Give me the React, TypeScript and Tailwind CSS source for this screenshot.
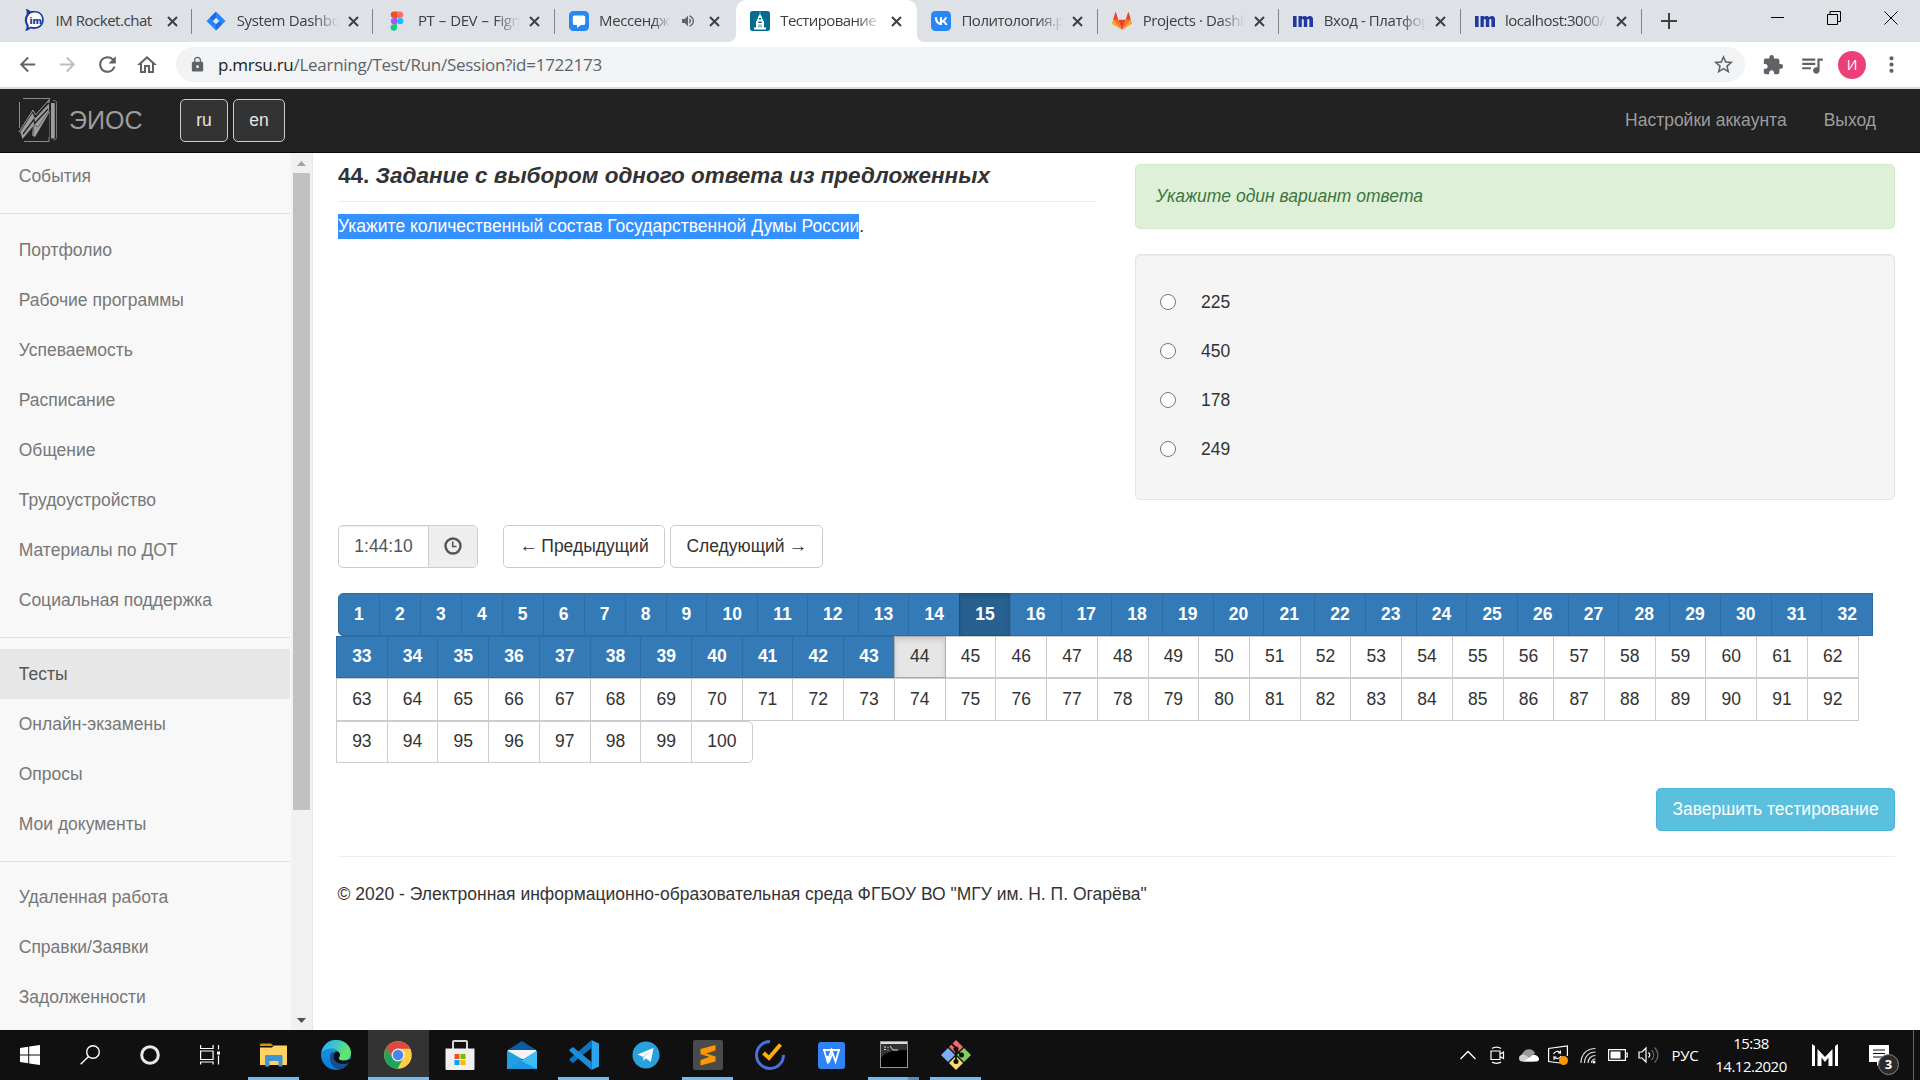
import React from "react";
import {
  MdArrowBack, MdArrowForward, MdRefresh, MdOutlineHome, MdLock, MdStarBorder,
  MdExtension, MdQueueMusic, MdMoreVert, MdVolumeUp,
} from "react-icons/md";

const UI = "font-['Open_Sans',sans-serif]";

/* ---------- favicons ---------- */
const RocketIcon = () => (
  <svg width="22" height="26" viewBox="0 0 22 26" className="-ml-px">
    <path d="M1.5 1c2 .2 4 1.100 5 2.300C8.500 2.700 13 2.500 16 4.500c5 3.200 5 11.500 0 14.800-3 2-7 1.900-9.500 1.300C5 22 3 23 1 22.600c1.500-1.500 2-3.500 1.200-5.500C.3 14 .3 9.500 2.500 6.500 3 4.500 2.700 2.500 1.500 1z" fill="#1f3a9e" />
    <path d="M6.500 5.500c3-1.300 6.500-1.200 9 .6 3.500 2.800 3.500 8.800 0 11.500-2.500 1.800-6 1.900-9 .8-.8.700-1.300 1-2 1.200.5-1.500.3-2.600-.6-3.800C2.300 12.500 3 8 6.500 5.500z" fill="#fff" />
    <text x="5.500" y="15.500" fontSize="9.500" fontWeight="800" fill="#1f3a9e" fontFamily="Open Sans">im</text>
  </svg>
);
const JiraIcon = () => (
  <svg width="20" height="20" viewBox="0 0 20 20"><path d="M10 .5l9.500 9.500-9.500 9.500L.5 10z" fill="#2684ff" /><path d="M10 6.700l3.300 3.300-3.300 3.300L6.700 10z" fill="#dee1e6" /><path d="M10 .5v6.200L6.700 10 4 6.500z" fill="#0f5fd6" opacity=".6" /><path d="M10 19.500v-6.200l3.300-3.300 2.700 3.500z" fill="#0f5fd6" opacity=".6" /></svg>
);
const FigmaIcon = () => (
  <svg width="20" height="20" viewBox="0 0 20 20"><path d="M10 .5H7a3.200 3.200 0 000 6.400h3z" fill="#f24e1e" /><path d="M10 .5h3a3.200 3.200 0 010 6.400h-3z" fill="#ff7262" /><path d="M10 6.900H7a3.200 3.200 0 000 6.400h3z" fill="#a259ff" /><circle cx="13.200" cy="10.100" r="3.200" fill="#1abcfe" /><path d="M7 13.300h3v3.100a3.200 3.200 0 11-3-3.100z" fill="#0acf83" /></svg>
);
const MessengerIcon = () => (
  <svg width="20" height="20" viewBox="0 0 20 20"><rect width="20" height="20" rx="4.500" fill="#2787f5" /><path d="M5.500 4.500h9A1.700 1.700 0 0116.200 6v6.500a1.700 1.700 0 01-1.700 1.500H12l-4 3v-3H5.500A1.700 1.700 0 013.800 12.500V6a1.700 1.700 0 011.700-1.500z" fill="#fff" /></svg>
);
const UnivIcon = () => (
  <svg width="20" height="20" viewBox="0 0 20 20"><rect width="20" height="20" rx="2.500" fill="#046c91" /><path d="M9.700 1h.6v2.500l1.700 2.500v2h1v2h1v6.500h2V18.500H4V16.500h2V10h1V8h1V6l1.700-2.500z" fill="#fff" /><path d="M9 7h2v1.500H9zM8.300 10.500h3.400v1.500H8.300zM8.600 13.500h.8v3h-.8zM10.600 13.500h.8v3h-.8z" fill="#046c91" /></svg>
);
const VkIcon = () => (
  <svg width="20" height="20" viewBox="0 0 20 20"><rect width="20" height="20" rx="4.500" fill="#2787f5" /><path d="M10.700 14c-4.300 0-6.800-2.900-6.900-7.800h2.200c.1 3.600 1.700 5.100 2.900 5.400V6.200H11v3.100c1.200-.1 2.500-1.500 2.900-3.100H16c-.3 1.900-1.700 3.300-2.700 3.900 1 .5 2.600 1.700 3.200 3.900h-2.300c-.5-1.500-1.700-2.700-3.200-2.800V14z" fill="#fff" /></svg>
);
const GitlabIcon = () => (
  <svg width="20" height="20" viewBox="0 0 20 20"><path d="M10 19l3.700-10.300H6.300z" fill="#e24329" /><path d="M10 19L6.300 8.700H1.100zM10 19l3.700-10.300h5.200z" fill="#fc6d26" /><path d="M1.100 8.700L0 12c0 .4.100.7.400.9L10 19zM18.900 8.700L20 12c0 .4-.1.700-.4.900L10 19z" fill="#fca326" /><path d="M1.100 8.700h5.200L4 1.500c-.1-.4-.6-.4-.7 0zM18.900 8.700h-5.200L16 1.500c.1-.4.600-.4.700 0z" fill="#e24329" /></svg>
);
const ImIcon = () => (
  <svg width="22" height="20" viewBox="0 0 22 20" className="-ml-px"><path d="M1 5h3.600v11H1zM6.500 5H10v1.300C11.300 4.500 14 4.400 15 6.300c1.500-2 6-2.300 6 2V16h-3.600V9.500c0-2-2.200-1.800-2.200 0V16h-3.400V9.500c0-2-2-1.800-2 0V16H6.500z" fill="#2238a0" /></svg>
);

const tabs = [
  { t: "IM Rocket.chat", I: RocketIcon, sep: true, track: "tracking-[-0.47px]" },
  { t: "System Dashboard", I: JiraIcon, sep: true, track: "tracking-[-0.35px]" },
  { t: "PT – DEV – Figma", I: FigmaIcon, sep: true, track: "tracking-[-0.5px] [word-spacing:1.2px]" },
  { t: "Мессенджер", I: MessengerIcon, sound: true, track: "tracking-[-0.4px]" },
  { t: "Тестирование - ", I: UnivIcon, active: true, track: "tracking-[-0.6px]" },
  { t: "Политология.pdf", I: VkIcon, sep: true, track: "tracking-[-0.5px]" },
  { t: "Projects · Dashboard", I: GitlabIcon, sep: true, track: "tracking-[-0.4px]" },
  { t: "Вход - Платформа", I: ImIcon, sep: true, track: "tracking-[-0.4px]" },
  { t: "localhost:3000/a", I: ImIcon, sep: true, track: "tracking-[-0.48px]" },
];

const Cross = () => (
  <svg width="11" height="11" viewBox="0 0 11 11" className="shrink-0"><path d="M1 1l9 9M10 1l-9 9" stroke="#3c4043" strokeWidth="2" /></svg>
);

function TabStrip() {
  return (
    <div className="flex h-[42px] bg-[#dee1e6] pl-[11px]">
      {tabs.map(({ t, I, sep, sound, active, track }, i) => (
        <div key={i} className={"relative flex h-[42px] w-[181.2px] shrink-0 items-center pl-[14px] " + (active ? "rounded-t-[10px] bg-white" : "")}>
          {active && (
            <svg className="absolute -left-[8px] bottom-0" width="197" height="8" viewBox="0 0 197 8"><path d="M8 0v8H0c5 0 8-3 8-8zM189 0v8h8c-5 0-8-3-8-8z" fill="#fff" /></svg>
          )}
          <span className="flex w-[30.500px] shrink-0 items-center"><I /></span>
          <span className={"-mt-px overflow-hidden whitespace-nowrap text-[15px] text-[#3c4043] " + track + (sound ? " w-[72px]" : " w-[102px]") + (i ? " [mask-image:linear-gradient(to_right,#000_75%,transparent)]" : "")}>{t}</span>
          {sound && <MdVolumeUp className="ml-[9px] mr-[4px] h-[16px] w-[16px] shrink-0 text-[#5f6368]" />}
          <span className="ml-[9px]"><Cross /></span>
          {sep && <span className="absolute right-0 top-[9px] h-[25px] w-px bg-[#808387]" />}
        </div>
      ))}
      <svg className="ml-[19px] mt-[13px]" width="16" height="16" viewBox="0 0 16 16"><path d="M8 0v16M0 8h16" stroke="#3c4043" strokeWidth="2" /></svg>
      <div className="ml-auto mr-[22px] flex gap-[43px] pt-[11px]">
        <svg width="14" height="14" viewBox="0 0 14 14"><path d="M1 6.500h13" stroke="#000" /></svg>
        <svg width="14" height="14" viewBox="0 0 14 14" fill="none" stroke="#000"><path d="M.5 3.500h10v10H.5zM3 3V.500h10.500v10H11" /></svg>
        <svg width="14" height="14" viewBox="0 0 14 14"><path d="M.5 .5l13 13M13.500 .5l-13 13" stroke="#000" /></svg>
      </div>
    </div>
  );
}

function Toolbar() {
  return (
    <div className="flex h-[47px] items-center border-b-2 border-[#dadce0] bg-white pl-[16px]">
      <MdArrowBack className="h-[23px] w-[23px] text-[#5f6368]" />
      <MdArrowForward className="ml-[17px] h-[23px] w-[23px] text-[#bcbec1]" />
      <MdRefresh className="ml-[16px] h-[25px] w-[25px] text-[#5f6368]" />
      <MdOutlineHome className="ml-[15px] h-[24px] w-[24px] text-[#5f6368]" />
      <div className="ml-[17px] flex h-[35px] w-[1568.5px] shrink-0 items-center rounded-full bg-[#f1f3f4] pl-[13px] pr-[10px]">
        <MdLock className="h-[17px] w-[17px] text-[#5f6368]" />
        <span className="ml-[12px] whitespace-nowrap text-[17px] tracking-[-0.27px] text-[#5f6368]"><span className="text-[#202124]">p.mrsu.ru</span>/Learning/Test/Run/Session?id=1722173</span>
        <MdStarBorder className="ml-auto h-[23px] w-[23px] text-[#5f6368]" />
      </div>
      <MdExtension className="ml-[17px] h-[22px] w-[22px] text-[#5f6368]" />
      <MdQueueMusic className="ml-[15px] h-[26px] w-[26px] text-[#5f6368]" />
      <span className="ml-[13.500px] flex h-[28px] w-[28px] items-center justify-center rounded-full bg-[#ec407a] text-[14px] text-white">И</span>
      <MdMoreVert className="ml-[13px] h-[25px] w-[25px] text-[#5f6368]" />
    </div>
  );
}

/* ---------- page ---------- */
const Logo = () => (
  <svg width="40" height="46" viewBox="0 0 40 46" fill="none" className="mb-[2px]">
    <path d="M5 1.500h27l-2.500 4M1.500 5v26M6 44.500h25V40" stroke="#8a8a8a" strokeWidth="1" />
    <path d="M1 35L15 13l2.500 5L31 3v3" stroke="#9d9d9d" strokeWidth="1" />
    <path d="M2 35.500L14.500 16l2.500 5.500L31 6.500v9.500L17 40l-3-1.500 1-9L4.500 42 3 37z" fill="#9d9d9d" />
    <path d="M5 37L15.800 22.500l.8 4L30 12" stroke="#222" strokeWidth="1.300" />
    <path d="M15 39l1-11 4 2 11-16" stroke="#555" strokeWidth=".8" />
    <path d="M31.500 14v30" stroke="#555" />
    <path d="M33 6h3.800v35.500H33z" fill="#9d9d9d" /><path d="M35 3.500c3 0 3.500.5 3.500 3V40c0 2-1 3-3 3" stroke="#777" />
  </svg>
);

function Navbar() {
  return (
    <div className="flex h-[64px] items-center border-b border-[#080808] bg-[#222] pl-[18px] pr-[44px] text-[#9d9d9d]">
      <Logo />
      <span className="ml-[11px] w-[111px] text-[25px]">ЭИОС</span>
      <span className="flex h-[43px] w-[48px] items-center justify-center rounded-[5px] border border-[#ccc] bg-[#333] text-[#e6e6e6]">ru</span>
      <span className="ml-[5px] flex h-[43px] w-[52px] items-center justify-center rounded-[5px] border border-[#ccc] bg-[#333] text-[#e6e6e6]">en</span>
      <span className="ml-auto">Настройки аккаунта</span>
      <span className="ml-[37px]">Выход</span>
    </div>
  );
}

const groups = [
  ["События"],
  ["Портфолио", "Рабочие программы", "Успеваемость", "Расписание", "Общение", "Трудоустройство", "Материалы по ДОТ", "Социальная поддержка"],
  ["Тесты", "Онлайн-экзамены", "Опросы", "Мои документы"],
  ["Удаленная работа", "Справки/Заявки", "Задолженности"],
];

function Sidebar() {
  return (
    <div className="flex h-[877px] w-[313px] shrink-0 overflow-hidden border-r border-[#e7e7e7] bg-[#f8f8f8]">
      <div className="-mt-[2px] w-[290px] shrink-0 text-[#777]">
        {groups.map((g, i) => (
          <div key={i}>
            {i > 0 && <div className={"mt-[11.5px] h-px bg-[#e0e0e0] " + (i === 3 ? "mb-[10.5px]" : "mb-[11.5px]")} />}
            {g.map((s) => (
              <div key={s} className={"flex h-[50px] items-center pl-[18.75px] " + (s === "Тесты" ? "bg-[#e7e7e7] text-[#555]" : "")}>{s}</div>
            ))}
          </div>
        ))}
      </div>
      <div className="ml-px flex w-[22px] flex-col items-center bg-[#f1f1f1]">
        <svg width="17" height="20" viewBox="0 0 17 20"><path d="M4 13l4.500-5 4.500 5z" fill="#a3a3a3" /></svg>
        <div className="h-[637px] w-[17px] bg-[#c1c1c1]" />
        <svg className="mt-auto" width="17" height="20" viewBox="0 0 17 20"><path d="M4 8l4.500 5L13 8z" fill="#505050" /></svg>
      </div>
    </div>
  );
}

const rows = [[1, 32], [33, 62], [63, 92], [93, 100]];

function cellStyle(n: number) {
  if (n === 15) return "bg-[#286090] border-[#204d74] text-white font-bold shadow-[inset_0_3px_5px_rgba(0,0,0,.125)]";
  if (n < 44) return "bg-[#337ab7] border-[#2e6da4] text-white font-bold";
  if (n === 44) return "relative bg-[#e6e6e6] border-[#adadad] text-[#333] shadow-[inset_0_3px_5px_rgba(0,0,0,.125)]";
  return "bg-white border-[#ccc] text-[#333]";
}

function cellWidth(n: number) {
  if (n < 10) return " w-[41.95px]";
  if (n === 11) return " w-[50.75px]";
  return n === 100 ? " w-[61.5px]" : " w-[51.72px]";
}

function Pager() {
  return (
    <div className="mt-[25px]">
      {rows.map(([a, b], r) => (
        <div key={a} className={"flex h-[42.5px] " + (r ? "-ml-[2px]" : "")}>
          {Array.from({ length: b - a + 1 }, (_, k) => a + k).map((n) => (
            <span
              key={n}
              className={
                "flex h-[42.5px] shrink-0 items-center justify-center border " + cellStyle(n) + cellWidth(n) +
                (n === a ? "" : " -ml-px") + (n === 1 ? " rounded-l-[5px]" : "") + (n === 100 ? " rounded-r-[5px]" : "")
              }
            >
              {n}
            </span>
          ))}
        </div>
      ))}
    </div>
  );
}

function Main() {
  return (
    <div className="flex grow flex-col pl-[25px] pr-[25px] text-[#333]">
      <div className="flex h-[347px] justify-between pt-[11px]">
        <div className="w-[759px]">
          <div className="-mt-px h-[38.500px] border-b border-[#eee] text-[22.5px] font-bold leading-[25px]">44. <i>Задание с выбором одного ответа из предложенных</i></div>
          <div className="mt-[12px] h-[25px] leading-[25px]"><span className="inline-block h-[25px] bg-[#3390ff] text-white">Укажите количественный состав Государственной Думы России</span>.</div>
        </div>
        <div className="w-[760px]">
          <div className="h-[65px] rounded-[5px] border border-[#d6e9c6] bg-[#dff0d8] pl-[20px] pt-[19px] italic leading-[25px] text-[#3c763d]">Укажите один вариант ответа</div>
          <div className="mt-[25px] h-[246px] rounded-[5px] border border-[#e3e3e3] bg-[#f5f5f5] pl-[24px] pt-[22px] shadow-[inset_0_1px_1px_rgba(0,0,0,.05)]">
            {["225", "450", "178", "249"].map((v) => (
              <div key={v} className="flex h-[49px] items-center">
                <span className="h-[16px] w-[16px] rounded-full border border-[#767676] bg-white" />
                <span className="ml-[25px] pt-[2px]">{v}</span>
              </div>
            ))}
          </div>
        </div>
      </div>
      <div className="mt-[25px] flex h-[43px]">
        <div className="flex w-[140px] overflow-hidden rounded-[5px] border border-[#ccc] text-[#555]">
          <span className="flex w-[90px] items-center justify-center border-r border-[#ccc] shadow-[inset_0_1px_1px_rgba(0,0,0,.075)]">1:44:10</span>
          <span className="flex grow items-center justify-center bg-[#eee]">
            <svg width="18" height="18" viewBox="0 0 18 18" fill="none" stroke="#555" className="mb-[2px]"><circle cx="9" cy="9" r="7.500" strokeWidth="2.400" /><path d="M8.700 4.500v5h3.800" strokeWidth="1.600" /></svg>
          </span>
        </div>
        <span className="ml-[25px] flex w-[162px] items-center justify-center gap-[4px] rounded-[5px] border border-[#ccc]"><span className="-mt-[3px] w-[18px] text-[19px]">←</span>Предыдущий</span>
        <span className="ml-[5px] flex w-[153px] items-center justify-center gap-[4px] rounded-[5px] border border-[#ccc]">Следующий<span className="-mt-[3px] w-[18px] text-[19px]">→</span></span>
      </div>
      <Pager />
      <div className="mt-[25px] flex h-[43px] w-[239px] items-center justify-center self-end rounded-[5px] border border-[#46b8da] bg-[#5bc0de] text-white">Завершить тестирование</div>
      <div className="mt-[25px] h-px bg-[#eee]" />
      <div className="-ml-[0.5px] mt-[25px] leading-[25px]">© 2020 - Электронная информационно-образовательная среда ФГБОУ ВО "МГУ им. Н. П. Огарёва"</div>
    </div>
  );
}

/* ---------- taskbar ---------- */
const S = ({ children, w = 30, h = 30 }: { children: React.ReactNode; w?: number; h?: number }) => (
  <svg width={w} height={h} viewBox={`0 0 ${w} ${h}`} fill="none">{children}</svg>
);
const system = [
  <S w={20} h={20}><path d="M0 3l8.200-1.200v7.700H0zM9.200 1.600L20 0v9.500H9.200zM0 10.500h8.200v7.700L0 17zM9.200 10.500H20V20L9.200 18.400z" fill="#fff" /></S>,
  <S w={20} h={20}><circle cx="13" cy="7" r="6.300" stroke="#fff" strokeWidth="1.400" /><path d="M8.500 11.500L.7 19.300" stroke="#fff" strokeWidth="1.400" /></S>,
  <S w={20} h={20}><circle cx="10" cy="10" r="8.300" stroke="#e8e8e8" strokeWidth="3" /></S>,
  <S w={20} h={20}><path d="M.6 0v3.500h12.500V0M.6 6h12.500v8.500H.6zM.6 19.500V17h12.500v2.500M18.500 0v4.500M18.500 10.500v9" stroke="#fff" strokeWidth="1.200" /><path d="M17 6.500h3v3h-3z" fill="#fff" /></S>,
];
const apps = [
  { bar: 1, i: <S><path d="M1 5.500C1 4 1.500 3.500 3 3.500h9l2.500 2.500H1z" fill="#d99300" /><path d="M1 7.500h12l2-2h13V25H1z" fill="#ffd262" /><path d="M6 16.500c0-1 .5-1.500 1.500-1.500H22c1 0 1.500.5 1.500 1.500V26.500h-4V21h-9v5.500H6z" fill="#3f94d6" /></S> },
  { i: <S><defs><linearGradient id="eg" x1="0" y1="0" x2="1" y2=".5"><stop offset=".25" stopColor="#2cb7ee" /><stop offset=".9" stopColor="#63e46f" /></linearGradient><linearGradient id="eb" x1="0" y1="0" x2="0" y2="1"><stop stopColor="#1c9be0" /><stop offset="1" stopColor="#0d7ad8" /></linearGradient></defs><circle cx="15" cy="15" r="15" fill="url(#eb)" /><path d="M.3 13C2 4.500 8 0 15 0c9 0 15 6 15 13 0 4.500-3 7.500-7.500 7.500-3 0-5-1-4.500-2.500C20 14 17 8.500 11 8.500 6 8.500 1.500 10.500.3 13z" fill="url(#eg)" /><path d="M10.500 12.500C6.500 18 10 28.500 18.500 29.600c4-1 7.500-4 9.200-7.600-6 3-16 1-15.200-9.500z" fill="#124f93" /><path d="M15.500 11.500c2 0 3.700 1.700 3.500 3.700-.1 1.500-1.700 2.500-1 3.800 1 2 6.500 2.300 10.500.2H30v5l-2-1.500c-5.500 2.300-11 1.300-13.800-2-2.700-3.200-2-9.200 1.300-9.200z" fill="#101010" /></S> },
  { on: 1, bar: 1, i: <S w={28} h={28}><circle cx="14" cy="14" r="13.800" fill="#ffcd46" /><path d="M26.300 7.800H14L8.600 17.100 2 7.200a13.800 13.800 0 0124.300.6z" fill="#db4a3f" /><path d="M2.100 7.100l6.500 10 10.800 0-6 10.700A13.800 13.800 0 012.100 7.100z" fill="#1da362" /><circle cx="14" cy="14" r="6.500" fill="#f1f1f1" /><circle cx="14" cy="14" r="5.200" fill="#4a86f0" /></S> },
  { i: <S><path d="M8 9V2q0-1 1-1h12q1 0 1 1v7" stroke="#d8d8d8" strokeWidth="2" /><path d="M.5 8.500h29v20.500q0 1-1 1h-27q-1 0-1-1z" fill="#f0f0f0" /><path d="M9.500 14h5v5h-5z" fill="#f25022" /><path d="M15.500 14h5v5h-5z" fill="#7fba00" /><path d="M9.500 20h5v5h-5z" fill="#00a4ef" /><path d="M15.500 20h5v5h-5z" fill="#ffb900" /></S> },
  { i: <S><path d="M0 10.500L15 1l15 9.500z" fill="#0a5aa5" /><path d="M1 10h28v9H1z" fill="#f3f3f3" /><path d="M0 10.500L15 19l-7 10H0z" fill="#1fa0e4" /><path d="M30 10.500V29H0z" fill="#3dbcf5" /><path d="M13.500 20.500L30 29H0z" fill="#2196e0" /></S> },
  { bar: 1, i: <S><path d="M22.500 0L30 3.500v23L22.500 30z" fill="#2ba4ef" /><path d="M22.500 0v8L4 23 .5 20.500V19L22 .5z" fill="#0d74bd" /><path d="M22.500 30v-8L4 7 .5 9.500V11L22 29.500z" fill="#1c8ddb" /></S> },
  { i: <S w={28} h={28}><circle cx="14" cy="14" r="13.500" fill="#2aa1dc" /><path d="M5.500 13.500L21.500 7l-2.700 14-5-3.700-2.500 2.400-.5-4z" fill="#fff" /><path d="M10.800 15.700L18.500 10l-6 6.300-1.200 3.400z" fill="#b8d5e6" /></S> },
  { bar: 1, i: <S><rect width="30" height="30" rx="2" fill="#4a4a4a" /><path d="M22.500 5v5.500L13 13.500l9.500 3v5L7.500 25.500V20l9-3-9-3V9z" fill="#ff9800" /></S> },
  { i: <S><path d="M15 1.500A13.500 13.500 0 1028.500 15" stroke="#4772dd" strokeWidth="3" /><path d="M8.500 13l5.500 5L25.500 4.500" stroke="#ffab0f" strokeWidth="4" /></S> },
  { i: <S w={27} h={27}><rect width="27" height="27" rx="3" fill="#2f83f5" /><path d="M5 8h17M6 8l3.500 11.500L13.500 8l4 11.500L21 8M9 14l2 5.500 4-9" stroke="#fff" strokeWidth="1.800" /></S> },
  { bar: 2, i: <S w={28} h={28}><rect x=".5" y=".5" width="27" height="26" fill="#000" stroke="#90969b" /><path d="M1 1h26v2H1z" fill="#d8dde1" /><path d="M1 3h26v6C14 9 5 11 1 17z" fill="#333" /><path d="M4 6h2M4 8.500h2M8 6v1M8 8.500v1M10 5l3 4h5" stroke="#ddd" /></S> },
  { bar: 1, i: <S><path d="M15 0l7 7-7 7-7-7z" fill="#f4696b" /><path d="M7 8l7 7-7 7-7-7z" fill="#7aacf7" /><path d="M23 8l7 7-7 7-7-7z" fill="#82cf60" /><path d="M15 16l7 7-7 7-7-7z" fill="#fbdc74" /><path d="M10.500 3.500L15 8v13M15 10l5.500 5" stroke="#101010" strokeWidth="1.800" /><circle cx="15" cy="9" r="2.500" fill="#101010" /><circle cx="20.500" cy="15" r="2.500" fill="#101010" /><circle cx="15" cy="21.500" r="2.500" fill="#101010" /></S> },
];
const tray = [
  <S w={16} h={10}><path d="M.5 9L8 1.500 15.500 9" stroke="#fff" strokeWidth="1.300" /></S>,
  <S w={16} h={18}><path d="M1 5h9v8.500H1zM10 8l3.500-2v6.500L10 10.500M2 2.500C4 .7 9 .7 11 2.500M2 16c2 1.700 7 1.700 9 0" stroke="#fff" strokeWidth="1.200" /></S>,
  <S w={21} h={14}><path d="M6 13a5.500 5.500 0 01-.5-9A6.500 6.500 0 0117 5.500L9 13z" fill="#9a9a9a" /><path d="M1 10c0-3 4-4.500 6-3l9 6.500H4C2 13.500 1 12 1 10z" fill="#d0d0d0" /><path d="M5 13.500l8-5c3-3.500 8-.5 8 2.500 0 1.500-1 2.500-2.500 2.500z" fill="#fff" /></S>,
  <S w={20} h={20}><path d="M12 18L.6 16.500v-13L19.400 1v10" stroke="#fff" strokeWidth="1.200" /><path d="M5.500 9c1-3 5-3.500 7-1V5.500M12.500 8H10M13 11c-1 3-5 3.500-7 1v3M6 12h2.500" stroke="#fff" strokeWidth="1.100" /><circle cx="15.500" cy="15.500" r="4.500" fill="#ff9800" /></S>,
  <S w={16} h={18}><path d="M1 17C1 8 7 2.500 15.500 2.500M4.500 17C4.500 10.500 9 6 15.500 6M8 17c0-4 3-7.500 7.500-7.500" stroke="#ddd" strokeWidth="1.200" /><path d="M11.500 17c0-2 1.500-4 4-4" stroke="#ddd" strokeWidth="1.200" /><circle cx="14" cy="16" r="1.500" fill="#fff" /></S>,
  <S w={20} h={12}><path d="M.6.6h16.800v10.800H.6zM17.500 4h1.700v4h-1.700" stroke="#fff" strokeWidth="1.200" /><path d="M2.500 2.500h10v7h-10z" fill="#fff" /></S>,
  <S w={21} h={18}><path d="M1 6h3l4-4v14l-4-4H1z" stroke="#fff" strokeWidth="1.200" /><path d="M10.500 6.500c1.500 1.500 1.500 3.500 0 5" stroke="#fff" strokeWidth="1.200" /><path d="M13.500 4c3 3 3 7 0 10M16.500 1.500c4.500 4.500 4.500 10.500 0 15" stroke="#666" strokeWidth="1.200" /></S>,
];

function Taskbar() {
  return (
    <div className="flex h-[50px] bg-[#101010] text-white">
      <div className="flex w-[242.5px]">
        {system.map((ic, i) => <span key={i} className="flex w-[60px] items-center justify-center">{ic}</span>)}
      </div>
      {apps.map((a, i) => (
        <span key={i} className={"relative flex w-[62px] items-center justify-center " + (a.on ? "bg-[#333] bg-clip-content pl-px" : "")}>
          {a.i}
          {a.bar && <span className={"absolute bottom-0 h-[3px] bg-[#76b9ed] " + (a.on ? "left-px right-0" : "inset-x-[5.5px]")} />}
          {a.bar === 2 && <span className="absolute bottom-0 right-[5.5px] h-[3px] w-[11px] bg-[#5a8cb5]" />}
        </span>
      ))}
      <div className="ml-auto flex pr-px">
        {tray.map((ic, i) => <span key={i} className="flex w-[30px] items-center justify-center">{ic}</span>)}
        <span className="flex w-[44px] items-center justify-center text-[15px] tracking-[-0.3px]">РУС</span>
        <span className="-mt-px flex w-[88px] flex-col items-center justify-center text-[15px] leading-[23px] tracking-[-0.5px]"><span>15:38</span><span>14.12.2020</span></span>
        <span className="flex w-[59px] items-center justify-center">
          <S w={26} h={22}><path d="M0 0l3 2v20H0zM26 0l-3 2v20h3zM5.500 5l7.500 8 7.500-8v17h-4V13.500L13 18l-3.500-4.500V22h-4z" fill="#fff" /></S>
        </span>
        <span className="relative w-[60px] border-r border-[#666]">
          <svg className="ml-[15px] mt-[14px]" width="20" height="22" viewBox="0 0 20 22"><path d="M0 1h20v17h-8l-4 4v-4H0z" fill="#fff" /><path d="M4 6h12M4 9.500h12M4 13h12" stroke="#101010" strokeWidth="1.200" /></svg>
          <span className="absolute left-[24px] top-[24px] flex h-[21px] w-[21px] items-center justify-center rounded-full border border-[#888] bg-[#2b2b2b] text-[13px] font-bold">3</span>
        </span>
        <span className="w-[5px]" />
      </div>
    </div>
  );
}

export default function App() {
  return (
    <div className="h-[1080px] w-[1920px] overflow-hidden bg-white">
      <div className={UI}>
        <TabStrip />
        <Toolbar />
      </div>
      <div className="font-['Liberation_Sans',Arial,sans-serif] text-[17.5px] leading-[25px]">
        <Navbar />
        <div className="flex h-[877px]">
          <Sidebar />
          <Main />
        </div>
      </div>
      <div className={UI}>
        <Taskbar />
      </div>
    </div>
  );
}
